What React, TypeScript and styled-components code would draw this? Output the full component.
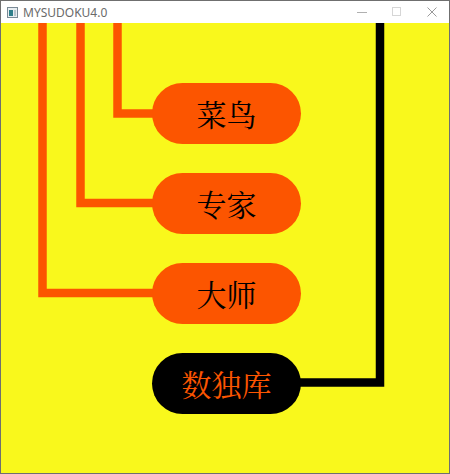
import React from "react";
import styled, { createGlobalStyle } from "styled-components";

const Global = createGlobalStyle`
  html, body { margin: 0; padding: 0; background: #ffffff; }
  #root { width: 450px; height: 474px; }
`;

const Window = styled.div`
  box-sizing: border-box;
  width: 450px;
  height: 474px;
  border: 1px solid #6f6f6f;
  display: flex;
  flex-direction: column;
  background: #ffffff;
  overflow: hidden;
`;

const TitleBar = styled.div`
  height: 22px;
  flex: none;
  display: flex;
  align-items: center;
  background: #ffffff;
`;

const AppIcon = styled.svg`
  width: 11px;
  height: 11px;
  margin-left: 6px;
  flex: none;
`;

const Title = styled.span`
  margin-left: 5px;
  font-family: "Segoe UI", "Noto Sans", "Liberation Sans", sans-serif;
  font-size: 12px;
  color: #6a6a6a;
  flex: 1;
`;

const Controls = styled.div`
  display: flex;
  height: 100%;
`;

const Ctrl = styled.div`
  width: 35px;
  height: 100%;
  display: flex;
  align-items: center;
  justify-content: center;
`;

const Client = styled.div`
  position: relative;
  flex: 1;
  background: #f9f81c;
  display: flex;
  flex-direction: column;
  gap: 29px;
  padding: 60px 0 0 151px;
`;

const Wires = styled.svg`
  position: absolute;
  left: 0;
  top: 0;
  width: 448px;
  height: 450px;
  z-index: 0;
`;

const Pill = styled.div<{ $dark?: boolean }>`
  position: relative;
  z-index: 1;
  width: 149px;
  height: 61px;
  border-radius: 31px;
  background: ${(p) => (p.$dark ? "#000000" : "#fc5500")};
  color: ${(p) => (p.$dark ? "#fc5500" : "#000000")};
  display: flex;
  align-items: center;
  justify-content: center;
  font-family: "Noto Serif CJK SC", "Noto Sans CJK SC", serif;
  font-size: 30px;
  font-weight: 400;
  padding-bottom: 1px;
  box-sizing: border-box;
`;

export default function App() {
  const orange = "#fc5500";
  return (
    <>
      <Global />
      <Window>
        <TitleBar>
          <AppIcon viewBox="0 0 11 11">
            <rect x="0.5" y="0.5" width="10" height="10" fill="#e8eef2" stroke="#7a8a96" />
            <rect x="2" y="3" width="4" height="6" fill="#2f7f8a" />
            <rect x="7" y="3" width="2" height="6" fill="#b8c4cc" />
          </AppIcon>
          <Title>MYSUDOKU4.0</Title>
          <Controls>
            <Ctrl>
              <svg width="10" height="10" viewBox="0 0 10 10">
                <line x1="0" y1="5.5" x2="10" y2="5.5" stroke="#b0b0b0" strokeWidth="1" />
              </svg>
            </Ctrl>
            <Ctrl>
              <svg width="10" height="10" viewBox="0 0 10 10">
                <rect x="0.5" y="0.5" width="8" height="8" fill="none" stroke="#d6d6d6" strokeWidth="1" />
              </svg>
            </Ctrl>
            <Ctrl>
              <svg width="10" height="10" viewBox="0 0 10 10">
                <path d="M0.5 0.5 L9.5 9.5 M9.5 0.5 L0.5 9.5" stroke="#9a9a9a" strokeWidth="1" fill="none" />
              </svg>
            </Ctrl>
          </Controls>
        </TitleBar>
        <Client>
          <Wires viewBox="0 0 448 450">
            <path d="M41.5 0 V270 H160" fill="none" stroke={orange} strokeWidth="8.5" strokeLinejoin="miter" />
            <path d="M79.5 0 V180 H160" fill="none" stroke={orange} strokeWidth="8.5" strokeLinejoin="miter" />
            <path d="M116.5 0 V90.5 H160" fill="none" stroke={orange} strokeWidth="8.5" strokeLinejoin="miter" />
            <path d="M290 359.5 H379 V0" fill="none" stroke="#000000" strokeWidth="8.5" strokeLinejoin="miter" />
          </Wires>
          <Pill>菜鸟</Pill>
          <Pill>专家</Pill>
          <Pill>大师</Pill>
          <Pill $dark>数独库</Pill>
        </Client>
      </Window>
    </>
  );
}
